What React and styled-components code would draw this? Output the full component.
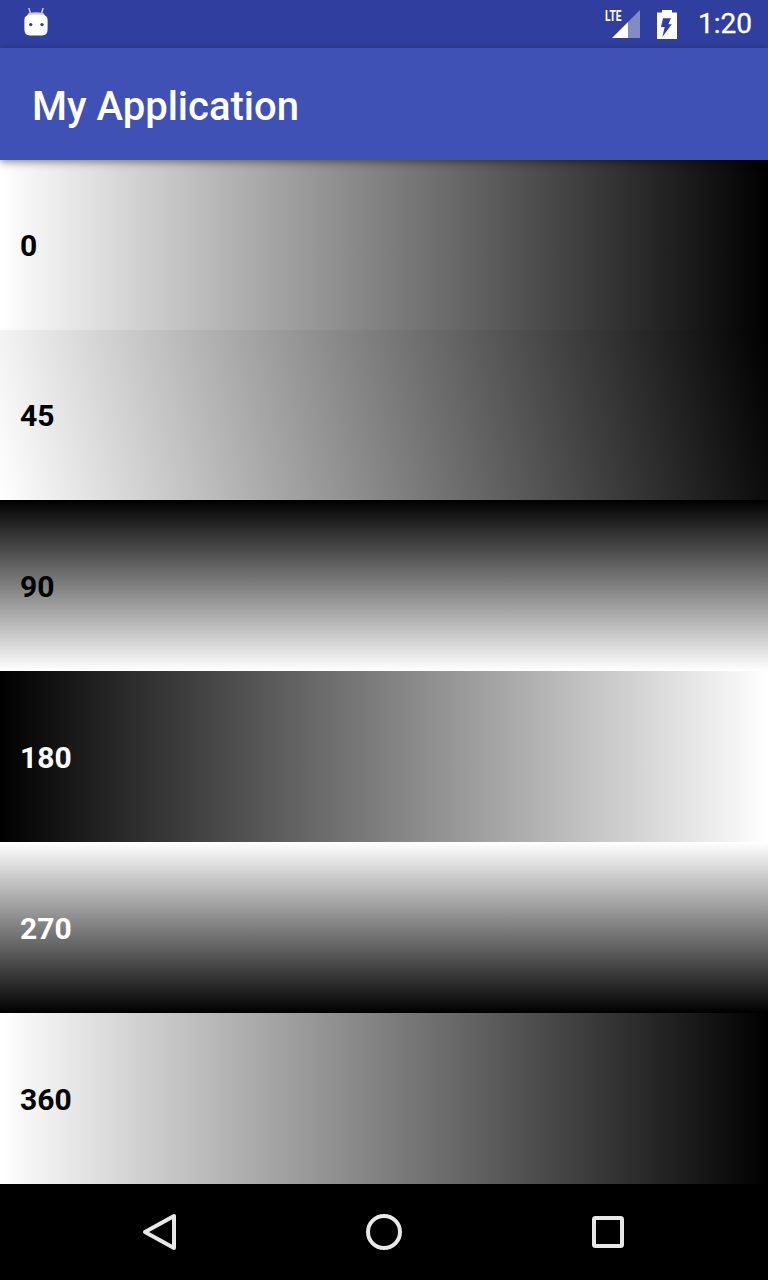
import React from 'react';
import styled, { createGlobalStyle } from 'styled-components';

const rows = [
  { label: '0', gradient: 'linear-gradient(to right, #fff, #000)', color: '#000' },
  { label: '45', gradient: 'linear-gradient(77.53deg, #fff, #000)', color: '#000' },
  { label: '90', gradient: 'linear-gradient(to top, #fff, #000)', color: '#000' },
  { label: '180', gradient: 'linear-gradient(to left, #fff, #000)', color: '#fff' },
  { label: '270', gradient: 'linear-gradient(to bottom, #fff, #000)', color: '#fff' },
  { label: '360', gradient: 'linear-gradient(to right, #fff, #000)', color: '#000' },
];

const App = () => (
  <Screen>
    <GlobalStyle />
    <StatusBar>
      <BotWrap>
        <BotIcon />
      </BotWrap>
      <StatusRight>
        <SignalWrap>
          <LteLabel>LTE</LteLabel>
          <SignalIcon />
        </SignalWrap>
        <BatteryIcon />
        <Clock>1:20</Clock>
      </StatusRight>
    </StatusBar>
    <Toolbar>
      <Title>My Application</Title>
    </Toolbar>
    <List>
      {rows.map((row) => (
        <Row key={row.label} $gradient={row.gradient}>
          <Label $color={row.color}>{row.label}</Label>
        </Row>
      ))}
    </List>
    <NavBar>
      <NavSlot><BackIcon /></NavSlot>
      <NavSlot><HomeIcon /></NavSlot>
      <NavSlot><RecentsIcon /></NavSlot>
    </NavBar>
  </Screen>
);

const BotIcon = () => (
  <svg width="24" height="28" viewBox="0 0 24 28">
    <path d="M5 0.5 L6.6 6 M19 0.5 L17.4 6" stroke="#c5cae9" strokeWidth="1.5" strokeLinecap="round" />
    <path d="M4 5.5 Q12 3 20 5.5 L21.5 9 H2.5 Z" fill="#c5cae9" />
    <path d="M6 6.8 Q12 6 18 6.8 Q23.6 7.2 23.6 12 V21.5 Q23.6 27.4 18 27.4 H6 Q0.4 27.4 0.4 21.5 V12 Q0.4 7.2 6 6.8 Z" fill="#fff" />
    <circle cx="6.7" cy="16.6" r="1.7" fill="#303f9f" />
    <circle cx="18" cy="16.6" r="1.7" fill="#303f9f" />
  </svg>
);

const SignalIcon = () => (
  <svg width="28" height="28" viewBox="0 0 28 28">
    <path d="M28 0 V28 H16 V12 Z" fill="#fff" fillOpacity="0.4" />
    <path d="M16 12 V28 H0 Z" fill="#fff" />
  </svg>
);

const BatteryIcon = () => (
  <svg width="20" height="29" viewBox="0 0 20 29">
    <path
      fillRule="evenodd"
      fill="#fff"
      d="M5 0 H15 V2.5 H20 V29 H0 V2.5 H5 Z M6 8.3 H14 L11.3 14.3 H14.7 L5.3 27 L7.7 17 H4 Z"
    />
  </svg>
);

const BackIcon = () => (
  <svg width="36" height="40" viewBox="0 0 36 40">
    <path d="M32 4 V36 L3 20 Z" fill="none" stroke="#e8e8e8" strokeWidth="4" strokeLinejoin="round" />
  </svg>
);

const HomeIcon = () => (
  <svg width="36" height="36" viewBox="0 0 36 36">
    <circle cx="18" cy="18" r="16" fill="none" stroke="#e8e8e8" strokeWidth="4" />
  </svg>
);

const RecentsIcon = () => (
  <svg width="32" height="32" viewBox="0 0 32 32">
    <rect x="2" y="2" width="28" height="28" rx="1.5" fill="none" stroke="#e8e8e8" strokeWidth="4" />
  </svg>
);

const GlobalStyle = createGlobalStyle`
  body {
    margin: 0;
    background: #000;
    font-family: 'Roboto', sans-serif;
  }
`;

const Screen = styled.div`
  width: 768px;
  height: 1280px;
  display: flex;
  flex-direction: column;
  overflow: hidden;
`;

const StatusBar = styled.div`
  height: 48px;
  flex: none;
  display: flex;
  align-items: center;
  justify-content: space-between;
  padding: 0 16px 0 24px;
  background: #303f9f;
`;

const BotWrap = styled.div`
  display: flex;
  margin-bottom: 4px;
`;

const StatusRight = styled.div`
  display: flex;
  align-items: center;
`;

const SignalWrap = styled.div`
  position: relative;
  display: flex;
  margin-right: 17px;
`;

const LteLabel = styled.span`
  position: absolute;
  left: -7px;
  top: -1px;
  font-family: 'Roboto', sans-serif;
  font-size: 15px;
  line-height: 15px;
  font-weight: 700;
  color: #fff;
  transform: scaleX(0.68);
  transform-origin: left;
`;

const Clock = styled.span`
  margin-left: 21px;
  font-size: 28px;
  line-height: 48px;
  color: #fff;
  -webkit-text-stroke: 0.3px #fff;
`;

const Toolbar = styled.header`
  position: relative;
  z-index: 1;
  height: 112px;
  flex: none;
  display: flex;
  align-items: center;
  padding: 4px 0 0 32px;
  box-sizing: border-box;
  background: #3f51b5;
  box-shadow: 0 2px 8px rgba(0, 0, 0, 0.45);
`;

const Title = styled.h1`
  margin: 0;
  font-size: 40px;
  font-weight: 500;
  color: #fff;
`;

const List = styled.main`
  flex: 1;
  display: grid;
  grid-template-rows: 170px 170px repeat(4, 171px);
`;

const Row = styled.div`
  display: flex;
  align-items: center;
  padding-left: 20px;
  background: ${(p) => p.$gradient};

  &:nth-child(n + 3) {
    padding-top: 2px;
  }
`;

const Label = styled.span`
  font-size: 30px;
  font-weight: 700;
  color: ${(p) => p.$color};
`;

const NavBar = styled.nav`
  height: 96px;
  flex: none;
  display: grid;
  grid-template-columns: repeat(3, 224px);
  justify-content: center;
  align-items: center;
  background: #000;
`;

const NavSlot = styled.div`
  display: flex;
  align-items: center;
  justify-content: center;
`;

export default App;
